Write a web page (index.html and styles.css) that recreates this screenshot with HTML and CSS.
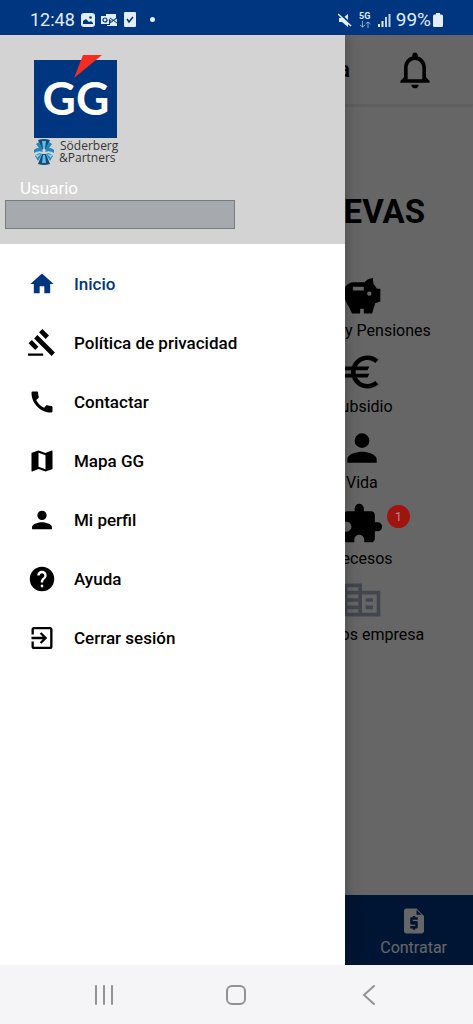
FILE: index.html
```
<!DOCTYPE html>
<html lang="es">
<head>
<meta charset="utf-8">
<meta name="viewport" content="width=device-width, initial-scale=1">
<title>GG</title>
<link rel="stylesheet" href="styles.css">
</head>
<body>
<div class="phone">
  <div class="status">
    <div class="status-group">
      <span class="clock">12:48</span>
      <svg width="14" height="14" viewBox="0 0 14 14"><rect width="14" height="14" rx="3" fill="currentColor"/><path d="M2 11V8l3-2 3 3 2-1 2 2v1z" fill="#003580"/><circle cx="9.500" cy="4.500" r="1.300" fill="#003580"/></svg>
      <svg width="17" height="14" viewBox="0 0 17 14"><path d="M5 1h10v4l-5 3-3-4H5zM0 3h8v8H0zM9 9l7-4v8H6v-1h3z" fill="currentColor"/><circle cx="4" cy="7" r="2" fill="none" stroke="#003580" stroke-width="1.200"/><path d="M9 5l7 5M9 10l7-5" stroke="#003580"/></svg>
      <svg width="12" height="15" viewBox="0 0 12 15"><rect width="12" height="15" rx="1" fill="currentColor"/><path d="M3 7l2 3 4-5" fill="none" stroke="#003580" stroke-width="1.600"/></svg>
      <span class="dot"></span>
    </div>
    <div class="status-group status-right">
      <svg width="14" height="14" viewBox="0 0 14 14"><path fill="currentColor" d="M1 5v4h3l6 5V1L5 5z"/><path d="M1 0l13 12" stroke="#003580" stroke-width="2"/><path d="M0 1l13 12" stroke="currentColor" stroke-width="1.600"/></svg>
      <span class="net"><span>5G</span><svg width="12" height="7" viewBox="0 0 12 7"><path d="M3.500 0v6M1 4l2.500 2L6 4M9 7V1M6.500 3L9 1l2.500 2" fill="none" stroke="currentColor" opacity=".6"/></svg></span>
      <svg width="13" height="14" viewBox="0 0 13 14" fill="currentColor"><rect y="11" width="2" height="3"/><rect x="3.500" y="8" width="2" height="6"/><rect x="7" y="4" width="2" height="10" opacity=".85"/><rect x="10.500" y="1" width="2" height="13" opacity=".85"/></svg>
      <span class="percent">99%</span>
      <svg width="10" height="14" viewBox="0 0 10 14"><path d="M3 0h4v1.500h1.500Q10 1.500 10 3v9.500Q10 14 8.500 14h-7Q0 14 0 12.500V3q0-1.500 1.500-1.500H3z" fill="currentColor"/></svg>
    </div>
  </div>

  <div class="stage">
    <div class="page">
      <header class="topbar">
        <span class="topbar-title">Cartera</span>
        <button class="bell" aria-label="Notificaciones"><svg width="44" height="44" viewBox="0 0 24 24"><path fill="currentColor" d="M12 22c1.100 0 2-.9 2-2h-4c0 1.100.9 2 2 2zm6-6v-5c0-3.070-1.630-5.640-4.500-6.320V4c0-.83-.67-1.500-1.500-1.500s-1.500.67-1.500 1.500v.68C7.640 5.360 6 7.920 6 11v5l-2 2v1h16v-1l-2-2zm-2 1H8v-6c0-2.480 1.510-4.500 4-4.500s4 2.020 4 4.500v6z"/></svg></button>
      </header>
      <main class="content">
        <h1 class="heading">NUEVAS</h1>
        <div class="tiles">
          <a class="tile" href="#"><svg width="44" height="44" viewBox="0 0 24 24"><path fill="currentColor" fill-rule="evenodd" d="M7.500 4.500h6Q15 2.500 18 2.200l.2 3 2 2.800H22v7l-2.800 1L17.500 21.500H13V19h-2v2.500H6.500C5 17 2 15 2 10c0-3 2.500-5.500 5.500-5.500zM7 7v2h6V7zm9 2.500a1.200 1.200 0 1 0 0 2.400 1.200 1.200 0 0 0 0-2.400z"/></svg><span>Ahorro y Pensiones</span></a>
          <a class="tile" href="#"><svg width="44" height="44" viewBox="0 0 24 24"><path fill="currentColor" d="M15 18.500c-2.510 0-4.680-1.420-5.760-3.500H15l1-2H8.580c-.05-.33-.08-.66-.08-1s.03-.67.080-1H15l1-2H9.240C10.320 6.920 12.500 5.500 15 5.500c1.610 0 3.090.59 4.230 1.570L21 5.300C19.410 3.870 17.300 3 15 3c-3.920 0-7.240 2.510-8.480 6H3l-1 2h4.060c-.04.33-.06.66-.06 1s.02.67.060 1H3l-1 2h4.520c1.240 3.490 4.560 6 8.480 6 2.310 0 4.410-.87 6-2.300l-1.780-1.770c-1.130.98-2.600 1.570-4.220 1.570z"/></svg><span>Subsidio</span></a>
          <a class="tile" href="#"><svg width="44" height="44" viewBox="0 0 24 24"><path fill="currentColor" d="M12 12a4 4 0 1 0 0-8 4 4 0 0 0 0 8zm0 2c-2.670 0-8 1.340-8 4v2h16v-2c0-2.660-5.330-4-8-4z"/></svg><span>Vida</span></a>
          <a class="tile" href="#"><svg width="44" height="44" viewBox="0 0 24 24"><path fill="currentColor" d="M20.500 11H19V7c0-1.100-.9-2-2-2h-4V3.500a2.500 2.500 0 0 0-5 0V5H4c-1.100 0-1.990.9-1.990 2v3.800H3.500c1.490 0 2.700 1.210 2.700 2.700s-1.210 2.700-2.700 2.700H2V20c0 1.100.9 2 2 2h3.800v-1.500c0-1.490 1.210-2.700 2.700-2.700s2.700 1.210 2.700 2.700V22H17c1.100 0 2-.9 2-2v-4h1.500a2.500 2.500 0 0 0 0-5z"/></svg><span>Decesos</span><b class="badge">1</b></a>
          <a class="tile" href="#"><svg class="company" width="44" height="44" viewBox="0 0 24 24"><path fill="currentColor" d="M12 7V3H2v18h20V7H12zM6 19H4v-2h2v2zm0-4H4v-2h2v2zm0-4H4V9h2v2zm0-4H4V5h2v2zm4 12H6v-2h4v2zm0-4H6v-2h4v2zm0-4H6V9h4v2zm0-4H6V5h4v2zm10 12h-8V9h8v10zm-2-8h-4v2h4v-2zm0 4h-4v2h4v-2z"/></svg><span>Seguros empresa</span></a>
        </div>
      </main>
      <nav class="tabbar">
        <a class="tab" href="#"><svg width="30" height="30" viewBox="0 0 24 24"><path fill="currentColor" fill-rule="evenodd" d="M14 2H6c-1.100 0-2 .9-2 2v16c0 1.100.9 2 2 2h12c1.100 0 2-.9 2-2V8l-6-6zm1 9h-4v1h3c.55 0 1 .45 1 1v4c0 .55-.45 1-1 1h-1v1h-2v-1H9v-2h4v-1h-3c-.55 0-1-.45-1-1v-4c0-.55.45-1 1-1h1V8h2v1h2v2zm-1-8v4h4z"/></svg><span>Contratar</span></a>
      </nav>
      <div class="scrim"></div>
    </div>

    <aside class="drawer">
      <div class="profile">
        <svg class="logo" width="84" height="112" viewBox="0 0 84 112" role="img" aria-label="GG Söderberg &amp; Partners">
          <rect x="0" y="5" width="83" height="78" fill="#003580"/>
          <path d="M49 0h19L40 23z" fill="#f52d20"/>
          <text class="logo-main" x="42" y="60" text-anchor="middle">GG</text>
          <g transform="translate(10 97)" fill="#2486b8">
            <path d="M-6-12Q0-14 6-12L2-3h-4z" fill="#174b7a"/><path d="M-6 12Q0 14 6 12L2 2h-4z" fill="#174b7a"/>
            <path d="M-2-11h4L1-3h-2zM-2 11h4L1 3h-2z" fill="#58c0e8"/>
            <path d="M-8-8l3-2 4 8-2 1zM8-8l-3-2-4 8 2 1zM-10-2q5-5 9 2-5-2-9 1zM10-2q-5-5-9 2 5-2 9 1zM-9 4q3-4 7-2l-4 7zM9 4Q6 0 2 2l4 7z"/>
            <path d="M-8 3l5-1-4 4zM8 3L3 2l4 4z" fill="#8bd8f4"/>
          </g>
          <text class="logo-sub" x="26" y="95">Söderberg</text>
          <text class="logo-sub" x="25" y="107">&amp;Partners</text>
        </svg>
        <label class="user-label" for="user">Usuario</label>
        <input class="user-field" id="user" type="text" readonly>
      </div>
      <nav class="menu">
        <a class="item active" href="#"><svg width="28" height="28" viewBox="0 0 24 24"><path fill="currentColor" d="M10 20v-6h4v6h5v-8h3L12 3 2 12h3v8z"/></svg><span>Inicio</span></a>
        <a class="item" href="#"><svg width="28" height="28" viewBox="0 0 24 24"><path fill="currentColor" d="M0 21h13v2H0zM5.240 8.070l2.830-2.830 15 15-2.830 2.830zM12.320 0l5.660 5.660-2.830 2.830-5.660-5.660zM3.330 9.480l5.660 5.660-2.830 2.830L.5 12.310z"/></svg><span>Política de privacidad</span></a>
        <a class="item" href="#"><svg width="28" height="28" viewBox="0 0 24 24"><path fill="currentColor" d="M20.010 15.380c-1.230 0-2.420-.2-3.530-.56-.35-.12-.74-.03-1.010.24l-1.570 1.970c-2.830-1.350-5.480-3.900-6.890-6.830l1.950-1.660c.27-.28.35-.67.24-1.020-.37-1.110-.56-2.300-.56-3.530 0-.54-.45-.99-.99-.99H4.190C3.650 3 3 3.240 3 3.990 3 13.280 10.730 21 20.010 21c.71 0 .99-.63.99-1.180v-3.450c0-.54-.45-.99-.99-.99z"/></svg><span>Contactar</span></a>
        <a class="item" href="#"><svg width="28" height="28" viewBox="0 0 24 24"><path fill="currentColor" d="M20.500 3l-.16.03L15 5.100 9 3 3.360 4.900c-.21.07-.36.25-.36.48V20.500c0 .28.22.5.500.5l.16-.03L9 18.900l6 2.100 5.640-1.900c.21-.07.36-.25.36-.48V3.500c0-.28-.22-.5-.5-.5zM15 19l-6-2.110V5l6 2.110V19z"/></svg><span>Mapa GG</span></a>
        <a class="item" href="#"><svg width="28" height="28" viewBox="0 0 24 24"><path fill="currentColor" d="M12 12a4 4 0 1 0 0-8 4 4 0 0 0 0 8zm0 2c-2.670 0-8.500 1.340-8.500 4v2h17v-2c0-2.660-5.830-4-8.500-4z"/></svg><span>Mi perfil</span></a>
        <a class="item" href="#"><svg width="28" height="28" viewBox="0 0 24 24"><path fill="currentColor" d="M12 1.500a10.500 10.500 0 1 0 0 21 10.500 10.500 0 0 0 0-21zM13 19h-2v-2h2v2zm2.070-7.750l-.9.920C13.450 12.900 13 13.500 13 15h-2v-.5c0-1.100.45-2.100 1.170-2.830l1.240-1.260c.37-.36.59-.86.59-1.410 0-1.100-.9-2-2-2s-2 .9-2 2H8c0-2.210 1.790-4 4-4s4 1.790 4 4c0 .88-.36 1.680-.93 2.250z"/></svg><span>Ayuda</span></a>
        <a class="item" href="#"><svg width="28" height="28" viewBox="0 0 24 24"><path fill="currentColor" d="M10.090 15.590L11.500 17l5-5-5-5-1.410 1.410L12.670 11H3v2h9.670l-2.580 2.590zM19 2.500H5c-1.110 0-2 .9-2 2V9h2V4.500h14v15H5V15H3v4.500c0 1.100.89 2 2 2h14c1.100 0 2-.9 2-2v-15c0-1.100-.9-2-2-2z"/></svg><span>Cerrar sesión</span></a>
      </nav>
    </aside>
  </div>

  <div class="sysnav">
    <button aria-label="Recientes"><svg width="22" height="22" viewBox="0 0 22 22"><path d="M3 2v18M11 2v18M19 2v18"/></svg></button>
    <button aria-label="Inicio"><svg width="22" height="22" viewBox="0 0 22 22"><rect x="2" y="2" width="18" height="18" rx="5"/></svg></button>
    <button aria-label="Atrás"><svg width="22" height="22" viewBox="0 0 22 22"><path d="M16 2L6 11l10 9"/></svg></button>
  </div>
</div>
</body>
</html>
```
FILE: styles.css
```
* { box-sizing: border-box; }
body { margin: 0; font-family: Roboto, "Liberation Sans", sans-serif; font-size: 16px; color: #000; }
a { color: inherit; text-decoration: none; }
button { border: 0; padding: 0; background: none; color: inherit; display: flex; }
svg { flex: none; display: block; }

.phone { min-height: 100vh; display: flex; flex-direction: column; background: #fff; }

.status { height: 35px; padding: 4px 30px 0; display: flex; align-items: center; justify-content: space-between; background: #003580; color: #e2edff; }
.status-group { display: flex; align-items: center; gap: 6px; }
.status-right { gap: 7px; }
.clock { font-size: 18px; line-height: 24px; }
.percent { margin: 0 -5px 0 -2px; font-size: 19px; line-height: 24px; }
.dot { width: 5px; height: 5px; margin-left: 8px; border-radius: 50%; background: currentColor; }
.net { display: flex; flex-direction: column; align-items: center; font-size: 9px; line-height: 9px; font-weight: 700; }

.stage { position: relative; flex: 1; display: flex; overflow: hidden; }
.page { position: relative; flex: 1; display: flex; flex-direction: column; min-width: 0; }
.topbar { height: 70px; padding: 0 36px; display: flex; align-items: center; justify-content: flex-end; gap: 43px; border-bottom: 1px solid #eee; box-shadow: 0 1px 3px #ddd; }
.topbar-title { font-size: 22px; font-weight: 500; }
.content { flex: 1; padding-top: 87px; }
.heading { margin: 0; padding-right: 48px; text-align: right; font-size: 33px; line-height: 40px; font-weight: 700; }
.tiles { width: 47%; margin: 42px 0 0 auto; display: flex; flex-direction: column; gap: 8px; }
.tile { position: relative; height: 68px; display: flex; flex-direction: column; align-items: center; line-height: 26px; white-space: nowrap; }
.company { color: #a9b0c0; }
.badge { position: absolute; z-index: 2; top: 3px; left: calc(50% + 25px); width: 23px; height: 23px; border-radius: 50%; background: #a01410; color: #a8908e; font-size: 13px; line-height: 23px; font-weight: 400; text-align: center; }
.tabbar { height: 70px; padding: 11px 26px 0; display: flex; justify-content: flex-end; background: #003580; color: #fff; }
.tab { display: flex; flex-direction: column; align-items: center; line-height: 24px; }
.scrim { position: absolute; inset: 0; z-index: 1; background: rgba(0, 0, 0, .6); }

.drawer { position: absolute; z-index: 3; top: 0; bottom: 0; left: 0; width: 73%; background: #fff; box-shadow: 0 0 14px rgba(0, 0, 0, .3); }
.profile { height: 209px; padding: 20px 5px 0; background: #d3d3d3; display: flex; flex-direction: column; align-items: flex-start; }
.logo { margin-left: 29px; overflow: visible; }
.logo-main { font: 700 46px Lato, sans-serif; fill: #fff; }
.logo-sub { font: 400 12px "Open Sans", sans-serif; fill: #333; }
.user-label { margin: 10px 0 1px 15px; color: #fff; line-height: 22px; font-size: 17px; }
.user-field { width: 230px; height: 29px; padding: 0 8px; border: 1px solid #77797c; border-radius: 0; background: #a6a9ad; font: inherit; }
.menu { padding: 10px 0; display: flex; flex-direction: column; }
.item { height: 59px; padding-left: 28px; display: flex; align-items: center; gap: 18px; font-size: 17px; font-weight: 500; line-height: 24px; }
.active { color: #003580; }

.sysnav { height: 59px; padding: 0 38px; display: flex; justify-content: space-around; align-items: center; background: #f5f5f8; }
.sysnav svg { fill: none; stroke: #929294; stroke-width: 2; stroke-linecap: round; }
```
